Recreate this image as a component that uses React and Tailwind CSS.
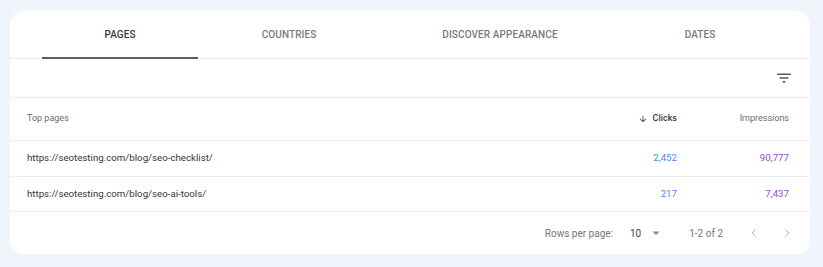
import React from "react";

const tabs = [
  { label: "PAGES", w: "w-[156px]", active: true },
  { label: "COUNTRIES", w: "w-[182px]" },
  { label: "DISCOVER APPEARANCE", w: "w-[240px]" },
  { label: "DATES", w: "w-[160px]" },
];

const rows = [
  { url: "https://seotesting.com/blog/seo-checklist/", clicks: "2,452", imp: "90,777", h: "h-[36px]" },
  { url: "https://seotesting.com/blog/seo-ai-tools/", clicks: "217", imp: "7,437", h: "h-[35px]" },
];

export default function App() {
  return (
    <div
      className="w-[823px] h-[267px] bg-[#f0f4fb] pt-[11px] pl-[10px]"
      style={{ fontFamily: "Roboto, 'Liberation Sans', sans-serif" }}
    >
      <div className="w-[800px] h-[243px] bg-white rounded-[14px] flex flex-col overflow-hidden">
        {/* Tabs */}
        <div className="h-[48px] border-b border-[#ececec] flex pl-[32px] shrink-0">
          {tabs.map((t) => (
            <div
              key={t.label}
              className={`${t.w} h-full relative flex items-center justify-center text-[10px] font-medium tracking-[0.1px] ${
                t.active ? "text-[#3a3a3a]" : "text-[#7a7a7a]"
              }`}
            >
              {t.label}
              {t.active && (
                <div className="absolute left-0 right-0 bottom-[-1px] h-[2px] bg-[#5f5f5f]" />
              )}
            </div>
          ))}
        </div>

        {/* Filter row */}
        <div className="h-[39px] border-b border-[#ececec] flex items-center justify-end pr-[17px] shrink-0">
          <svg width="18" height="18" viewBox="0 0 24 24" className="mt-[-1px]">
            <path d="M10 18h4v-2h-4v2zM3 6v2h18V6H3zm3 7h12v-2H6v2z" fill="#5a5a5a" />
          </svg>
        </div>

        {/* Header row */}
        <div className="h-[43px] border-b border-[#ececec] grid grid-cols-[1fr_120px_112px] items-center pl-[17px] pr-[21px] text-[9px] shrink-0">
          <div className="text-[#6b6b6b]">Top pages</div>
          <div className="flex items-center justify-end gap-[5px] text-[#3a3a3a] font-medium">
            <svg width="10" height="10" viewBox="0 0 24 24">
              <path d="M20 12l-1.41-1.41L13 16.17V4h-2v12.17l-5.58-5.59L4 12l8 8 8-8z" fill="#3a3a3a" />
            </svg>
            <span>Clicks</span>
          </div>
          <div className="text-right text-[#6b6b6b]">Impressions</div>
        </div>

        {/* Data rows */}
        {rows.map((r) => (
          <div
            key={r.url}
            className={`${r.h} border-b border-[#ececec] grid grid-cols-[1fr_120px_112px] items-center pl-[17px] pr-[21px] text-[9.7px] shrink-0`}
          >
            <div className="text-[#363636]">{r.url}</div>
            <div className="text-right text-[#4a8df0]">{r.clicks}</div>
            <div className="text-right text-[#9b48d0]">{r.imp}</div>
          </div>
        ))}

        {/* Footer */}
        <div className="flex-1 flex items-center justify-end pr-[18px] text-[10px] text-[#757575]">
          <span>Rows per page:</span>
          <span className="ml-[17px] text-[#444444]">10</span>
          <svg width="10" height="10" viewBox="0 0 10 10" className="ml-[10px]">
            <path d="M1.5 3.5h7L5 7z" fill="#8a8a8a" />
          </svg>
          <span className="ml-[28px]">1-2 of 2</span>
          <svg width="10" height="10" viewBox="0 0 10 10" className="ml-[26px]">
            <path d="M6.5 1.5L3 5l3.5 3.5" stroke="#b5b5b5" strokeWidth="1" fill="none" />
          </svg>
          <svg width="10" height="10" viewBox="0 0 10 10" className="ml-[23px]">
            <path d="M3.5 1.5L7 5 3.5 8.5" stroke="#b5b5b5" strokeWidth="1" fill="none" />
          </svg>
        </div>
      </div>
    </div>
  );
}
